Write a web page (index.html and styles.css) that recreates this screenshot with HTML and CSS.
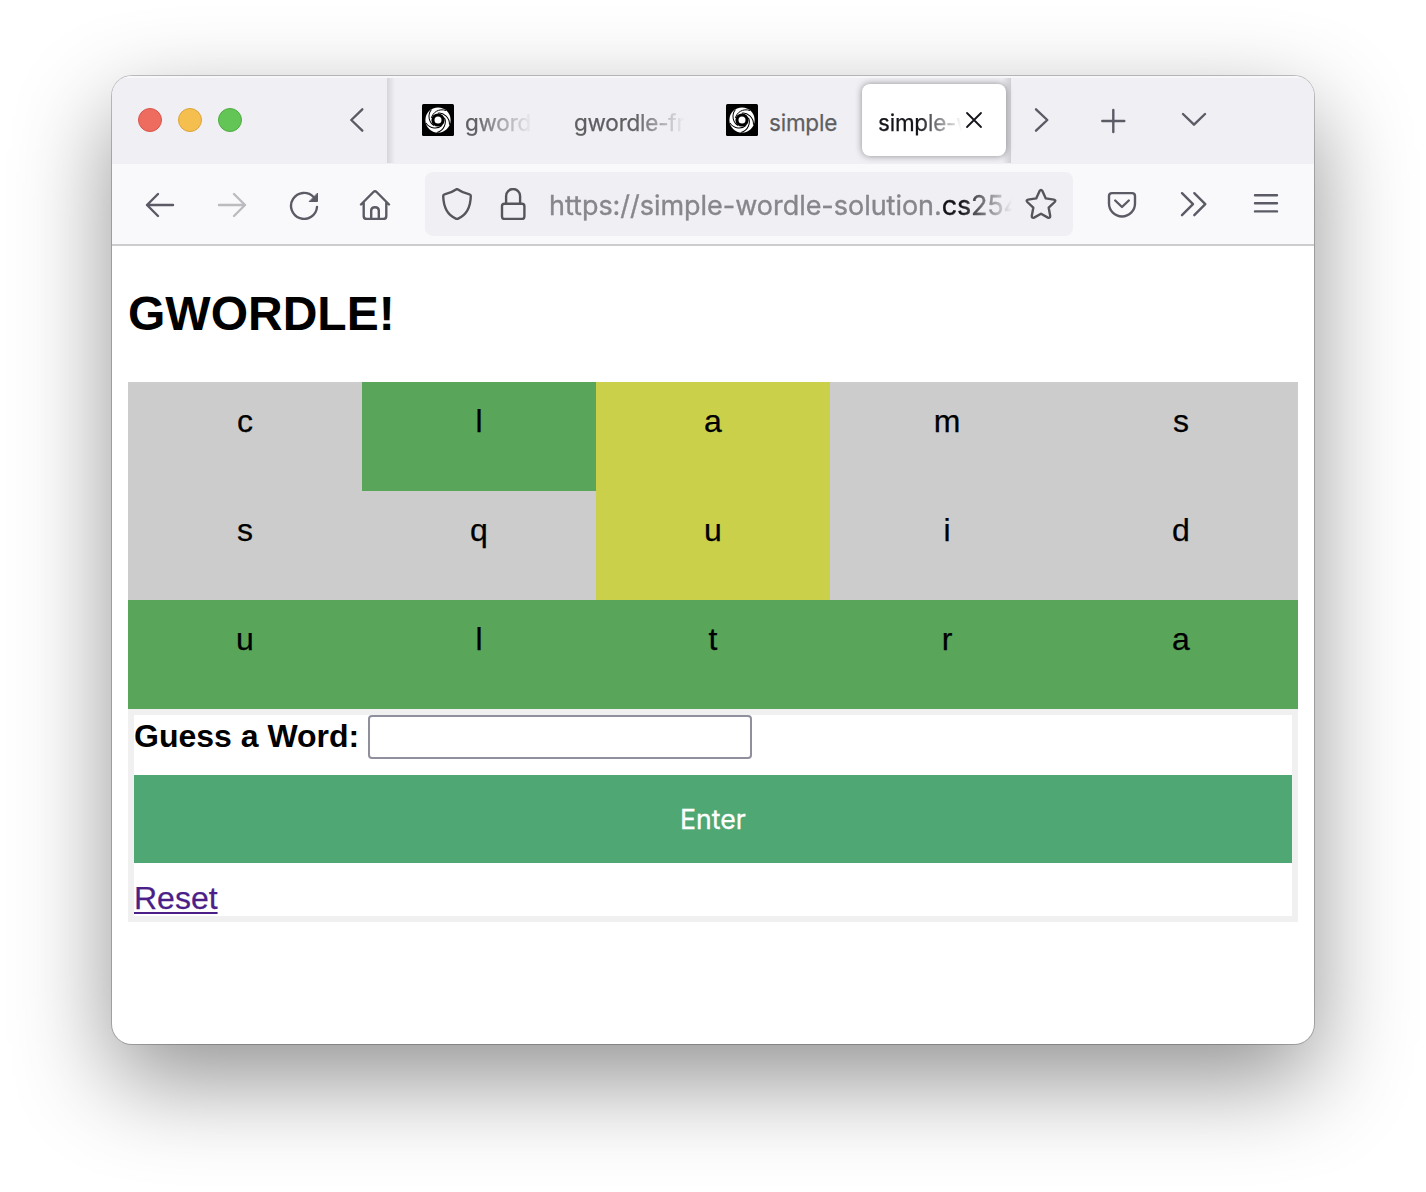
FILE: index.html
```html
<!DOCTYPE html>
<html lang="en">
<head>
<meta charset="utf-8">
<title>GWORDLE!</title>
<link rel="stylesheet" href="styles.css">
</head>
<body>
<svg class="defs" width="0" height="0" aria-hidden="true">
  <symbol id="swirl" viewBox="0 0 32 32">
    <rect width="32" height="32" rx="1.5" fill="#000"/>
    <circle cx="16" cy="16" r="12.6" fill="#fff"/>
    <circle cx="16" cy="16" r="6.6" fill="#000"/>
    <g fill="none" stroke="#000" stroke-width="1">
      <path id="arm" d="M9.500 14C10.500 8.500 17 4 24 6.500"/>
      <use href="#arm" transform="rotate(72 16 16)"/>
      <use href="#arm" transform="rotate(144 16 16)"/>
      <use href="#arm" transform="rotate(216 16 16)"/>
      <use href="#arm" transform="rotate(288 16 16)"/>
    </g>
    <circle cx="16" cy="16" r="3.500" fill="#fff"/>
  </symbol>
</svg>
<div class="window">
  <header class="tabbar">
    <div class="lights"><i class="light red"></i><i class="light yellow"></i><i class="light green"></i></div>
    <svg class="icon scroll-left" viewBox="0 0 32 32"><path d="M21.300 5.300L10.300 16L21.300 26.700"/></svg>
    <div class="tabs">
      <div class="tab first"><svg class="favicon"><use href="#swirl"/></svg><span class="label fade-a">gwordl</span></div>
      <div class="tab second"><span class="label fade-b">gwordle-fr</span></div>
      <div class="tab third"><svg class="favicon"><use href="#swirl"/></svg><span class="label">simple</span></div>
      <div class="tab active"><span class="label fade-c">simple-w</span><svg class="close" viewBox="0 0 18 18"><path d="M2 2L16 16M16 2L2 16"/></svg></div>
    </div>
    <svg class="icon scroll-right" viewBox="0 0 32 32"><path d="M11 5.300L22.300 16L11 26.700"/></svg>
    <svg class="icon new-tab" viewBox="0 0 32 32"><path d="M5.300 17H27.300M16.300 6V28"/></svg>
    <svg class="icon all-tabs" viewBox="0 0 32 32"><path d="M5 10L16 20.700L27 10"/></svg>
  </header>
  <nav class="toolbar">
    <svg class="icon back" viewBox="0 0 32 32"><path d="M29 17H3M14 6L3 17L14 28"/></svg>
    <svg class="icon forward" viewBox="0 0 32 32"><path d="M3 17H29M18 6L29 17L18 28"/></svg>
    <svg class="icon reload" viewBox="0 0 32 32"><path d="M29 19A13 13 0 1 1 25.500 9"/><path class="solid" d="M21.500 13.500H29.500V5.500Z"/></svg>
    <svg class="icon home" viewBox="0 0 32 32"><path d="M2 16.500L14.400 4Q16 2.400 17.600 4L30 16.500M4.700 14.500V28Q4.700 31 7.700 31H24.300Q27.300 31 27.300 28V14.500M12.200 31V22.500Q12.200 19.200 16 19.200Q19.800 19.200 19.800 22.500V31"/></svg>
    <div class="urlbar">
      <svg class="icon shield" viewBox="0 0 32 32"><path d="M16 1C12 3.800 7 5.500 3.500 6.300Q2.200 6.600 2.200 8C2.500 19 6.500 27 14.800 30.600Q16 31.100 17.200 30.600C25.500 27 29.500 19 29.800 8Q29.800 6.600 28.500 6.300C25 5.500 20 3.800 16 1Z"/></svg>
      <svg class="icon lock" viewBox="0 0 32 32"><rect x="5" y="15.800" width="22.400" height="15.200" rx="2.500"/><path d="M9.100 15.500V8A7 7 0 0 1 23.100 8V15.500"/></svg>
      <span class="url">https://simple-wordle-solution.<b>cs254</b></span>
      <svg class="icon star" viewBox="0 0 32 32"><path d="M14.600 3Q16 .800 17.400 3L20.800 10.400L28.900 11.600Q31.300 12.200 29.700 14L23.700 19.700L25.200 27.900Q25.300 30.500 22.900 29.600L16 25.700L9.100 29.600Q6.700 30.500 6.800 27.900L8.300 19.700L2.300 14Q.700 12.200 3.100 11.600L11.200 10.400Z"/></svg>
    </div>
    <svg class="icon pocket" viewBox="0 0 32 32"><path d="M6 5.100H26Q29 5.100 29 8.100V15.500A13 13 0 0 1 3 15.500V8.100Q3 5.100 6 5.100ZM9.200 12.500L16 19L22.800 12.500"/></svg>
    <svg class="icon more" viewBox="0 0 32 32"><path d="M5 5.200L16 16.200L5 27.200M17.300 5.200L28.300 16.200L17.300 27.200"/></svg>
    <svg class="icon menu" viewBox="0 0 32 32"><path d="M5 7.200H27M5 15.300H27M5 23.400H27"/></svg>
  </nav>
  <main class="page">
    <h1>GWORDLE!</h1>
    <div class="board">
      <div class="cell">c</div><div class="cell hit">l</div><div class="cell near">a</div><div class="cell">m</div><div class="cell">s</div>
      <div class="cell">s</div><div class="cell">q</div><div class="cell near">u</div><div class="cell">i</div><div class="cell">d</div>
      <div class="cell hit">u</div><div class="cell hit">l</div><div class="cell hit">t</div><div class="cell hit">r</div><div class="cell hit">a</div>
    </div>
    <form class="guess">
      <div class="field"><label for="word">Guess a Word:</label><input id="word" type="text"></div>
      <button type="button">Enter</button>
      <a href="#">Reset</a>
    </form>
  </main>
</div>
</body>
</html>
```
FILE: styles.css
```css
* { box-sizing: border-box; }

body {
  margin: 0;
  height: 1192px;
  padding: 76px 112px 0;
  background: #fff;
  overflow: hidden;
  font-family: "Liberation Sans", Arial, sans-serif;
  color: #000;
}

.defs { display: block; }

.window {
  width: 1202px;
  height: 968px;
  border-radius: 20px;
  background: #fff;
  overflow: hidden;
  box-shadow: 0 0 0 1px rgba(0, 0, 0, .22), 0 36px 96px rgba(0, 0, 0, .43);
}

.icon {
  flex: none;
  width: 32px;
  height: 32px;
  fill: none;
  stroke: #5b5b66;
  stroke-width: 2.4;
  stroke-linecap: round;
  stroke-linejoin: round;
}
.icon .solid { fill: #5b5b66; stroke-width: 1; }

.tabbar {
  display: flex;
  align-items: center;
  height: 88px;
  padding-left: 26px;
  background: #f0eff4;
  box-shadow: inset 0 2px #f7f7fa;
}
.lights { display: flex; gap: 16px; }
.light { width: 24px; height: 24px; border-radius: 50%; border: 1px solid; }
.red { background: #ed6b5f; border-color: #d9564b; }
.yellow { background: #f5bf4f; border-color: #dba53c; }
.green { background: #62c555; border-color: #51ac43; }
.scroll-left { margin-left: 99px; }
.scroll-right { margin-left: 14px; }
.new-tab { margin-left: 40px; }
.all-tabs { margin-left: 49px; }

.tabs {
  display: flex;
  align-items: center;
  width: 624px;
  height: 85px;
  margin-left: 14px;
  background:
    linear-gradient(to right, #d6d6da, rgba(240, 239, 244, 0)) left / 8px 100% no-repeat,
    linear-gradient(to left, #d0d0d4, rgba(240, 239, 244, 0)) right / 9px 100% no-repeat;
}
.tab {
  display: flex;
  align-items: center;
  font: 22.500px/32px Inter, sans-serif;
  letter-spacing: -.22px;
  color: #5f5f61;
  -webkit-text-stroke: .25px;
}
.favicon { flex: none; width: 32px; height: 32px; margin-right: 11px; }
.label { overflow: hidden; white-space: nowrap; padding-top: 5px; }
.first { margin-left: 35px; }
.second { margin-left: 44px; }
.third { margin-left: 40px; }
.fade-a { width: 65px; mask-image: linear-gradient(to right, #000 15%, transparent 105%); }
.fade-b { width: 112px; mask-image: linear-gradient(to right, #000 55%, transparent 99%); }
.third .label { width: 69px; }
.active {
  width: 144px;
  height: 72px;
  margin-left: 24px;
  padding-left: 16px;
  border-radius: 8px;
  background: #fff;
  color: #15141a;
  box-shadow: 0 0 7px rgba(0, 0, 0, .42);
}
.fade-c { width: 84px; mask-image: linear-gradient(to right, #000 48%, transparent); }
.close { width: 18px; height: 18px; margin-left: 3px; fill: none; stroke: #15141a; stroke-width: 1.8; stroke-linecap: round; }

.toolbar {
  display: flex;
  align-items: center;
  height: 82px;
  padding-left: 32px;
  background: #f9f9fb;
  border-bottom: 2px solid #cccccf;
}
.toolbar .forward { margin-left: 40px; stroke: #bbbbc0; }
.reload { margin-left: 40px; }
.home { margin-left: 39px; }
.pocket { margin-left: 33px; }
.more { margin-left: 39px; }
.menu { margin-left: 41px; }
.urlbar {
  display: flex;
  align-items: center;
  width: 648px;
  height: 64px;
  margin-left: 34px;
  padding-left: 16px;
  border-radius: 8px;
  background: #f0eff4;
}
.urlbar .icon { stroke: #55555c; }
.lock { margin-left: 24px; }
.url {
  width: 463px;
  margin-left: 20px;
  padding-top: 4px;
  overflow: hidden;
  white-space: nowrap;
  font: 27px/34px Inter, sans-serif;
  letter-spacing: -.03px;
  color: #87868c;
  -webkit-text-stroke: .35px;
  mask-image: linear-gradient(to right, #000 89%, transparent);
}
.url b { font-weight: 400; color: #15141a; letter-spacing: -.2px; }
.star { margin-left: 13px; }

.page { padding: 40px 16px 0; }
h1 { margin: 0 0 40px; font-size: 48px; line-height: 56px; }
.board {
  display: grid;
  grid-template-columns: repeat(5, 1fr);
  grid-auto-rows: 109px;
}
.cell {
  padding-top: 21px;
  background: #ccc;
  text-align: center;
  font-size: 32px;
  line-height: 37px;
  -webkit-text-stroke: .25px;
}
.hit { background: #59a65b; }
.near { background: #cbd04a; }

.guess {
  height: 213px;
  border: 6px solid #f0f0f0;
  font-size: 32px;
  line-height: 37px;
}
.field { display: flex; align-items: center; height: 44px; }
.field label { width: 234px; padding-bottom: 2px; font-weight: bold; white-space: nowrap; }
.field input {
  width: 384px;
  height: 44px;
  border: 2px solid #8f8f9d;
  border-radius: 4px;
  background: #fff;
}
.guess button {
  display: block;
  width: 100%;
  height: 88px;
  margin: 16px 0 17px;
  padding: 0;
  border: 0;
  background: #4fa774;
  color: #fff;
  font: 26.670px/32px Inter, sans-serif;
  -webkit-text-stroke: .3px;
}
.guess a {
  display: block;
  width: max-content;
  color: #4b1f87;
  -webkit-text-stroke: .25px;
  text-decoration-thickness: 2px;
  text-underline-offset: 3px;
}
```
